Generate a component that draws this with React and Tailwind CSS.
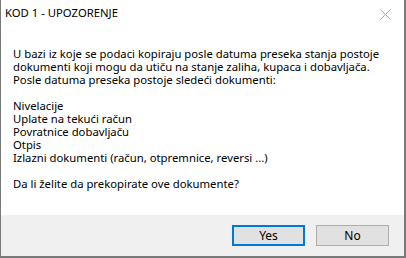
const message = `U bazi iz koje se podaci kopiraju posle datuma preseka stanja postoje
dokumenti koji mogu da utiču na stanje zaliha, kupaca i dobavljača.
Posle datuma preseka postoje sledeći dokumenti:

Nivelacije
Uplate na tekući račun
Povratnice dobavljaču
Otpis
Izlazni dokumenti (račun, otpremnice, reversi ...)

Da li želite da prekopirate ove dokumente?`;

export default function App() {
  return (
    <div className="w-[406px] h-[258px] bg-white border-l border-r-2 border-b-2 border-[#7a7a7a] flex flex-col text-[11.3px] text-black font-['Noto_Sans',sans-serif]">
      <div className="h-[26px] flex items-center justify-between pl-[4px] pr-[13px]">
        <span>KOD 1 - UPOZORENJE</span>
        <svg width="11" height="11" viewBox="0 0 11 11" className="mt-[2px]">
          <path d="M0.5 0.5 L10.5 10.5 M10.5 0.5 L0.5 10.5" stroke="#a8a8a8" strokeWidth="1" fill="none" />
        </svg>
      </div>
      <div className="flex-1 pt-[21px] pl-[12px]">
        <p className="leading-[13px] whitespace-pre-line">{message}</p>
      </div>
      <div className="h-[41px] bg-[#f0f0f0] flex justify-end items-start pt-[10px] pr-[15px] gap-[11px] text-[12px]">
        <button className="w-[73px] h-[21px] bg-[#e1e1e1] border-2 border-[#0078d7] flex items-center justify-center">Yes</button>
        <button className="w-[73px] h-[21px] bg-[#e1e1e1] border border-[#adadad] flex items-center justify-center">No</button>
      </div>
    </div>
  );
}
